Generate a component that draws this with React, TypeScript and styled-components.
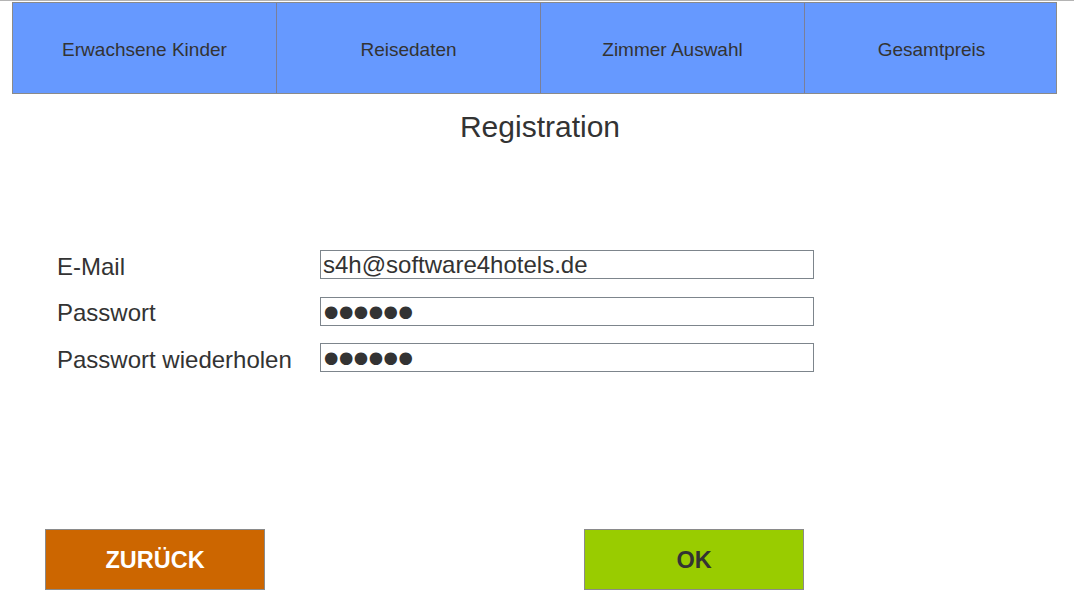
import React from "react";
import styled, { createGlobalStyle } from "styled-components";

const Global = createGlobalStyle`
  html, body { margin: 0; padding: 0; background: #fff; }
  body { font-family: "Liberation Sans", Arial, sans-serif; color: #333; }
`;

const Page = styled.div`
  width: 1074px;
  height: 599px;
  border-top: 1px solid #b4b4b4;
  box-sizing: border-box;
  overflow: hidden;
`;

const Tabs = styled.nav`
  display: grid;
  grid-template-columns: 264px 264px 264px 253px;
  margin: 1px 0 0 12px;
  width: 1045px;
  height: 92px;
  box-sizing: border-box;
  border: 1px solid #8a8a8a;
  background: #6699ff;
`;

const Tab = styled.div<{ $last?: boolean }>`
  display: flex;
  align-items: center;
  justify-content: center;
  padding-top: 3px;
  font-size: 19px;
  color: #333;
  border-right: ${(p) => (p.$last ? "none" : "1px solid #7a7f99")};
`;

const Title = styled.h1`
  margin: 16px 0 0 6px;
  font-size: 30px;
  line-height: 34px;
  font-weight: normal;
  text-align: center;
  color: #333;
`;

const Form = styled.div`
  display: grid;
  grid-template-columns: 263px 494px;
  grid-auto-rows: 29px;
  row-gap: 17.5px;
  margin: 106px 0 0 57px;
`;

const Label = styled.label`
  display: flex;
  align-items: center;
  height: 29px;
  font-size: 24px;
  line-height: 29px;
  color: #333;
  padding-top: 3px;
  box-sizing: border-box;
`;

const Field = styled.input`
  box-sizing: border-box;
  width: 494px;
  height: 29px;
  border: 1px solid #7d858c;
  padding: 1px 2px 0;
  margin: 0;
  font-family: "Liberation Sans", Arial, sans-serif;
  font-size: 24px;
  color: #333;
  background: #fff;
  outline: none;
`;

const Secret = styled(Field)`
  font-family: "DejaVu Sans", sans-serif;
  font-size: 16.5px;
  letter-spacing: 0.5px;
  padding: 0 3px;
`;

const Footer = styled.div`
  display: flex;
  gap: 319px;
  margin: 157px 0 0 45px;
`;

const Button = styled.button<{ $bg: string; $fg: string }>`
  width: 220px;
  height: 61px;
  box-sizing: border-box;
  border: 1px solid #8a8a8a;
  background: ${(p) => p.$bg};
  color: ${(p) => p.$fg};
  font-family: "Liberation Sans", Arial, sans-serif;
  font-size: 23.5px;
  font-weight: bold;
  padding: 2px 0 0;
  cursor: pointer;
`;

const tabs = ["Erwachsene Kinder", "Reisedaten", "Zimmer Auswahl", "Gesamtpreis"];
const dots = "\u25CF\u25CF\u25CF\u25CF\u25CF\u25CF";

export default function App() {
  return (
    <>
      <Global />
      <Page>
        <Tabs>
          {tabs.map((t, i) => (
            <Tab key={t} $last={i === tabs.length - 1}>
              {t}
            </Tab>
          ))}
        </Tabs>
        <Title>Registration</Title>
        <Form>
          <Label>E-Mail</Label>
          <Field type="text" readOnly defaultValue="s4h@software4hotels.de" />
          <Label>Passwort</Label>
          <Secret type="text" readOnly defaultValue={dots} aria-label="Passwort" />
          <Label>Passwort wiederholen</Label>
          <Secret type="text" readOnly defaultValue={dots} aria-label="Passwort wiederholen" />
        </Form>
        <Footer>
          <Button $bg="#cc6600" $fg="#ffffff">ZURÜCK</Button>
          <Button $bg="#99cc00" $fg="#333333">OK</Button>
        </Footer>
      </Page>
    </>
  );
}
